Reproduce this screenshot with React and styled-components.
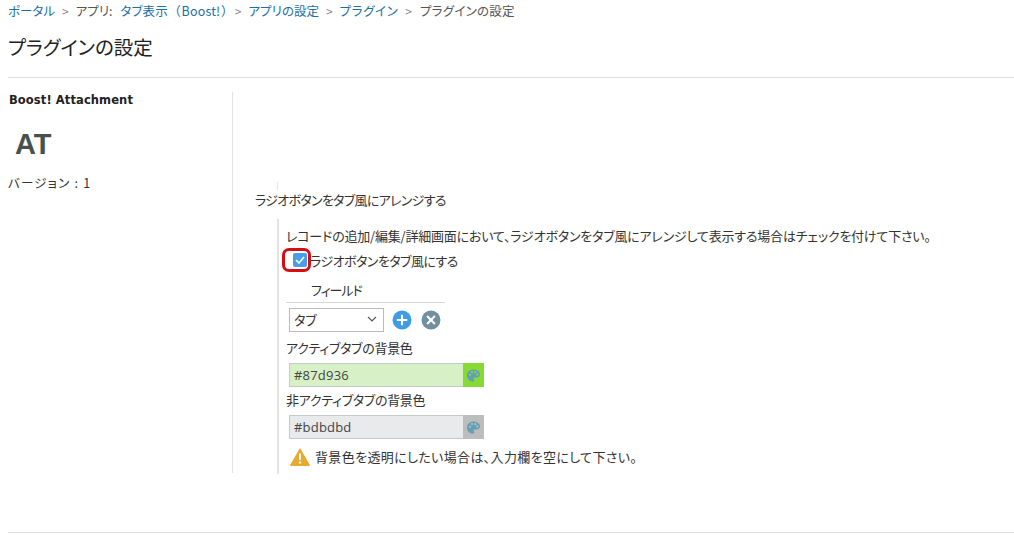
import styled, { createGlobalStyle } from "styled-components";

const GlobalStyle = createGlobalStyle`
  html, body {
    margin: 0;
    padding: 0;
    background: #fff;
  }
  body {
    font-family: "Noto Sans CJK JP", "Open Sans", sans-serif;
    font-size: 13px;
    color: #333;
    font-feature-settings: "palt";
  }
`;

const Page = styled.div`
  width: 1014px;
  height: 538px;
  overflow: hidden;
  padding-left: 8px;
  box-sizing: border-box;
`;

const Breadcrumb = styled.nav`
  display: flex;
  align-items: center;
  height: 20px;
  font-size: 12.5px;
  color: #555;
`;

const Crumb = styled.a`
  color: #1b6ea8;
`;

const AppCrumb = styled(Crumb)`
  margin-left: 5px;
  letter-spacing: 0.2px;
`;

const Paren = styled.span`
  margin: ${(p) => (p.$open ? "0 1px 0 6px" : "0 0 0 1px")};
`;

const WideCrumb = styled(Crumb)`
  letter-spacing: 0.6px;
`;

const Sep = styled.span`
  color: #888;
  margin: 0 7px;
  font-size: 12px;
`;

const LastCrumb = styled.span`
  margin-left: 1px;
  letter-spacing: 0.25px;
`;

const Title = styled.h1`
  margin: 15px 0 0;
  height: 42px;
  font-size: 19.5px;
  line-height: 24px;
  font-weight: 400;
  color: #222;
`;

const Rule = styled.hr`
  margin: 0;
  border: 0;
  border-top: 1px solid #ddd;
`;

const Columns = styled.div`
  display: flex;
  margin-top: 14px;
  height: 381px;
`;

const Side = styled.aside`
  width: 224px;
  flex: none;
  border-right: 1px solid #e3e3e3;
`;

const PluginName = styled.div`
  margin: 1px 0 0 1px;
  font-family: "DejaVu Sans", sans-serif;
  font-weight: 700;
  font-size: 11.5px;
  letter-spacing: 0.1px;
  line-height: 14px;
  color: #222;
`;

const Logo = styled.div`
  margin: 19px 0 0 7px;
  font-family: "Liberation Sans", sans-serif;
  font-weight: 700;
  font-size: 29px;
  line-height: 36px;
  color: #47524d;
`;

const Version = styled.div`
  margin-top: 13px;
  line-height: 16px;
  font-size: 12.5px;
  letter-spacing: 1.2px;
`;

const Main = styled.main`
  flex: 1;
  padding: 90px 0 0 22px;
`;

const Tick = styled.div`
  width: 1px;
  height: 8px;
  margin-left: 22px;
  background: #e6e6e6;
`;

const SectionLabel = styled.div`
  margin-top: 1px;
  line-height: 18px;
  letter-spacing: -0.7px;
`;

const SectionBody = styled.div`
  margin: 10px 0 0 22px;
  height: 255px;
  padding: 7px 0 0 7px;
  border-left: 2px solid #e3e3e3;
  box-sizing: border-box;
`;

const Hint = styled.div`
  line-height: 20px;
  letter-spacing: -0.2px;
  white-space: nowrap;
`;

const CheckRow = styled.div`
  display: flex;
  align-items: center;
  height: 24px;
  margin-top: 2px;
  letter-spacing: -0.55px;
`;

const CheckFrame = styled.span`
  display: flex;
  align-items: center;
  width: 29px;
  height: 24px;
  margin: 0 -1px 0 -4px;
  padding-left: 8px;
  border: 3px solid #d40f14;
  border-radius: 7px;
  box-sizing: border-box;
`;

const Check = styled.span`
  display: flex;
  align-items: center;
  justify-content: center;
  width: 14px;
  height: 14px;
  background: #4a9de8;
  border-radius: 2px;
`;

const FieldTable = styled.div`
  width: 159px;
  margin-top: 7px;
`;

const FieldHead = styled.div`
  height: 24px;
  line-height: 21px;
  padding-left: 25px;
  border-bottom: 1px solid #d8d8d8;
  box-sizing: border-box;
  letter-spacing: -1px;
`;

const FieldRow = styled.div`
  display: flex;
  align-items: center;
  gap: 9px;
  margin-top: 5px;
  padding-left: 3px;
`;

const Select = styled.div`
  display: flex;
  align-items: center;
  justify-content: space-between;
  width: 95px;
  height: 24px;
  margin-right: -1px;
  padding: 0 6px 2px 4px;
  border: 1px solid #bbb;
  box-sizing: border-box;
`;

const RoundIcon = styled.svg`
  width: 20px;
  height: 20px;
  flex: none;
`;

const ColorLabel = styled.div`
  line-height: 18px;
  letter-spacing: -0.3px;
  margin-top: ${(p) => p.$top}px;
`;

const ColorField = styled.div`
  display: flex;
  width: 195px;
  height: 24px;
  margin: 6px 0 0 3px;
`;

const ColorInput = styled.div`
  flex: 1;
  display: flex;
  align-items: center;
  padding-left: 4px;
  font-family: "Open Sans", sans-serif;
  letter-spacing: 0.2px;
  color: #444;
  border: 1px solid #c4c9cc;
  border-right: 0;
  background: ${(p) => p.$tint};
`;

const Swatch = styled.div`
  display: flex;
  align-items: center;
  justify-content: center;
  width: 21px;
  background: ${(p) => p.$color};
`;

const Warning = styled.div`
  display: flex;
  align-items: center;
  gap: 5px;
  margin: 8px 0 0 4px;
  line-height: 20px;
  letter-spacing: 0.35px;
`;

const Footer = styled(Rule)`
  margin-top: 59px;
`;

function Palette() {
  return (
    <svg width="15" height="15" viewBox="0 0 16 16">
      <path
        fill="#64a0b4"
        fillRule="evenodd"
        d="M8 1.5C4 1.5 1 4.3 1 7.9c0 3.5 3 6.6 6.2 6.6 1.1 0 1.6-.7 1.6-1.4 0-1-.7-1.2-.7-2 0-.7.6-1.1 1.4-1.1h1.8c2 0 3.7-1 3.7-3C15 3.9 11.8 1.5 8 1.5zM4.2 8.4a1.2 1.2 0 1 1 0-2.4 1.2 1.2 0 0 1 0 2.4zm2.2-2.9a1.2 1.2 0 1 1 0-2.4 1.2 1.2 0 0 1 0 2.4zm3.4 0a1.2 1.2 0 1 1 0-2.4 1.2 1.2 0 0 1 0 2.4zm2.3 2.6a1.2 1.2 0 1 1 0-2.4 1.2 1.2 0 0 1 0 2.4z"
      />
    </svg>
  );
}

function App() {
  return (
    <Page>
      <GlobalStyle />
      <Breadcrumb>
        <Crumb>ポータル</Crumb>
        <Sep>&gt;</Sep>
        アプリ:&nbsp;
        <AppCrumb>
          タブ表示<Paren $open>（</Paren>Boost!<Paren>）</Paren>
        </AppCrumb>
        <Sep>&gt;</Sep>
        <Crumb>アプリの設定</Crumb>
        <Sep>&gt;</Sep>
        <WideCrumb>プラグイン</WideCrumb>
        <Sep>&gt;</Sep>
        <LastCrumb>プラグインの設定</LastCrumb>
      </Breadcrumb>
      <Title>プラグインの設定</Title>
      <Rule />
      <Columns>
        <Side>
          <PluginName>Boost! Attachment</PluginName>
          <Logo>AT</Logo>
          <Version>バージョン : 1</Version>
        </Side>
        <Main>
          <Tick />
          <SectionLabel>ラジオボタンをタブ風にアレンジする</SectionLabel>
          <SectionBody>
            <Hint>
              レコードの追加/編集/詳細画面において、ラジオボタンをタブ風にアレンジして表示する場合はチェックを付けて下さい。
            </Hint>
            <CheckRow>
              <CheckFrame>
                <Check>
                  <svg width="10" height="8" viewBox="0 0 10 8">
                    <path d="M1 4l3 3 5-6" fill="none" stroke="#fff" strokeWidth="1.6" />
                  </svg>
                </Check>
              </CheckFrame>
              ラジオボタンをタブ風にする
            </CheckRow>
            <FieldTable>
              <FieldHead>フィールド</FieldHead>
              <FieldRow>
                <Select>
                  タブ
                  <svg width="10" height="6" viewBox="0 0 10 6">
                    <path d="M1 1l4 4 4-4" fill="none" stroke="#555" strokeWidth="1.1" />
                  </svg>
                </Select>
                <RoundIcon viewBox="0 0 19 19">
                  <circle cx="9.5" cy="9.5" r="9" fill="#3f9be8" />
                  <path d="M9.5 4.5v10M4.5 9.5h10" stroke="#fff" strokeWidth="2" />
                </RoundIcon>
                <RoundIcon viewBox="0 0 19 19">
                  <circle cx="9.5" cy="9.5" r="9" fill="#71909f" />
                  <path d="M5.8 5.8l7.4 7.4M13.2 5.8l-7.4 7.4" stroke="#fff" strokeWidth="2" />
                </RoundIcon>
              </FieldRow>
            </FieldTable>
            <ColorLabel $top={7}>アクティブタブの背景色</ColorLabel>
            <ColorField>
              <ColorInput $tint="#d8f0c6">#87d936</ColorInput>
              <Swatch $color="#87d936">
                <Palette />
              </Swatch>
            </ColorField>
            <ColorLabel $top={4}>非アクティブタブの背景色</ColorLabel>
            <ColorField>
              <ColorInput $tint="#e8eaec">#bdbdbd</ColorInput>
              <Swatch $color="#bdbdbd">
                <Palette />
              </Swatch>
            </ColorField>
            <Warning>
              <svg width="20" height="18" viewBox="0 0 20 18">
                <path d="M10 .8L19.6 17.4H.4z" fill="#e8a92c" stroke="#e8a92c" strokeLinejoin="round" />
                <path d="M10 5.5v6.5" stroke="#fff" strokeWidth="2" />
                <circle cx="10" cy="14.5" r="1.2" fill="#fff" />
              </svg>
              背景色を透明にしたい場合は、入力欄を空にして下さい。
            </Warning>
          </SectionBody>
        </Main>
      </Columns>
      <Footer />
    </Page>
  );
}

export default App;
